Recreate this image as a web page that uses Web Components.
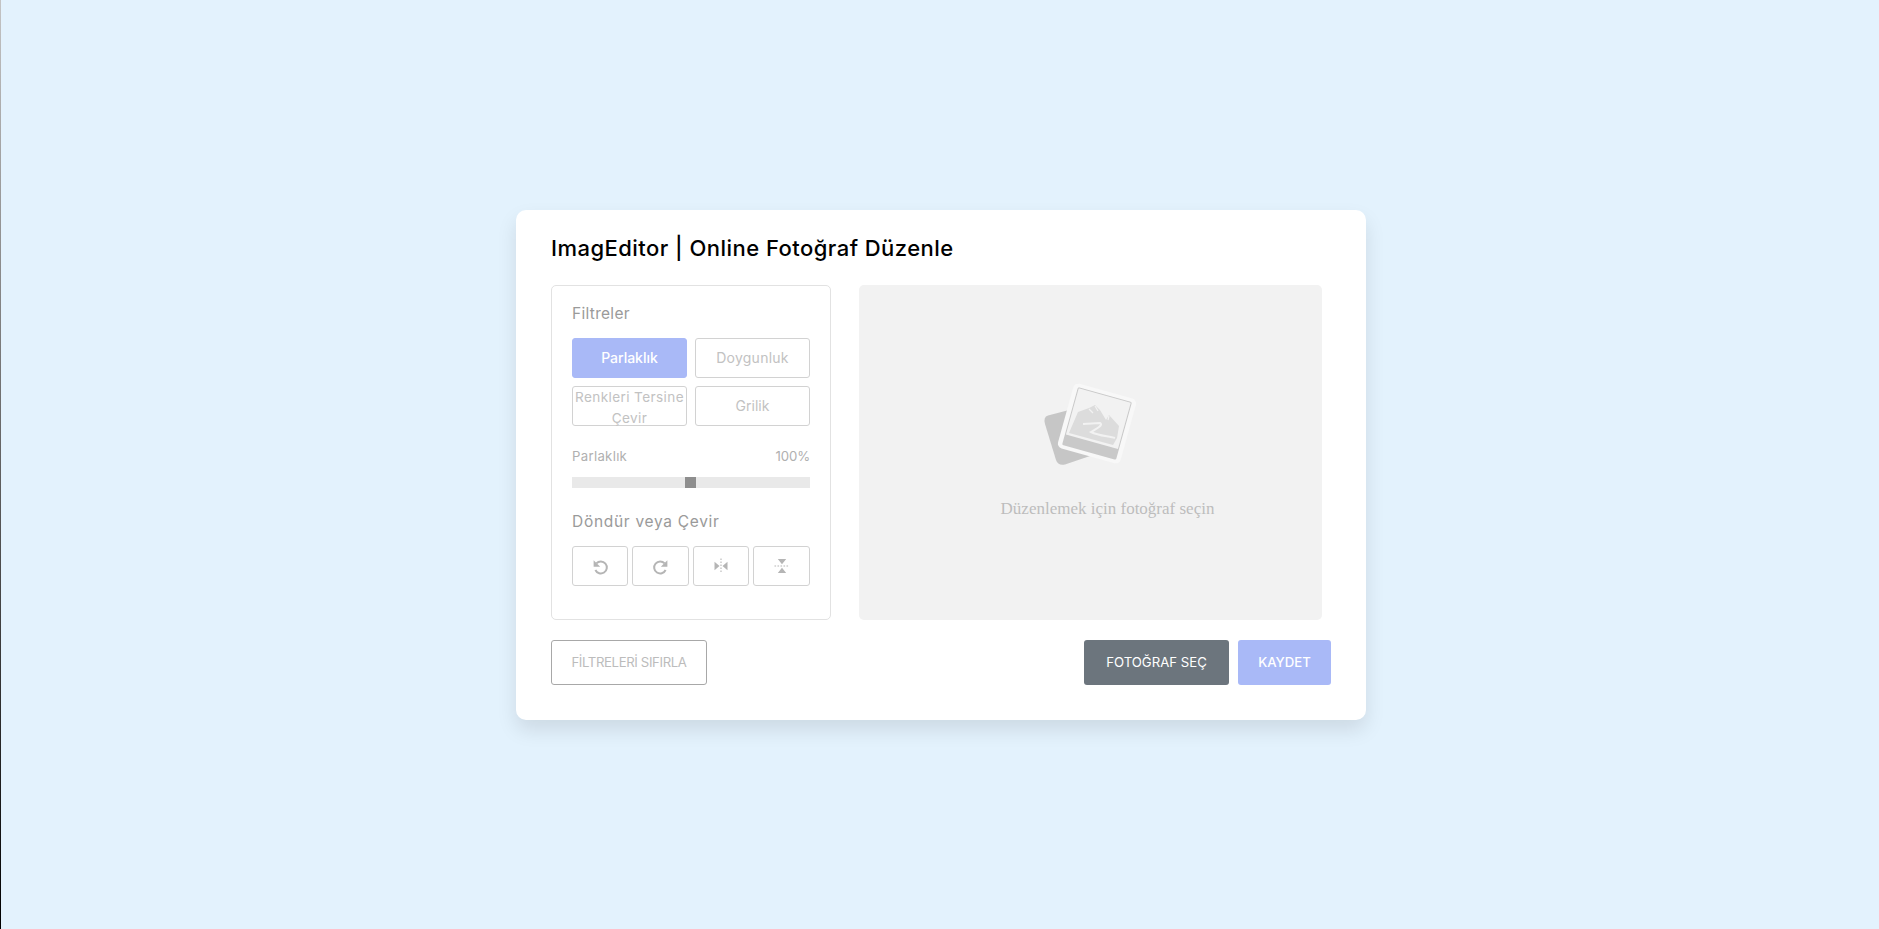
<!DOCTYPE html>
<html lang="tr">
<head>
<meta charset="utf-8">
<title>ImagEditor | Online Fotoğraf Düzenle</title>
<style>
  html, body { margin: 0; height: 100%; }
  body { background: #e3f2fd; font-family: Inter, "Noto Sans", sans-serif; }
</style>
</head>
<body>
<editor-page>
  <editor-card heading="ImagEditor | Online Fotoğraf Düzenle">
    <filter-panel slot="panel"></filter-panel>
    <preview-pane slot="preview" message="Düzenlemek için fotoğraf seçin"></preview-pane>
    <action-button slot="reset" kind="outline">FİLTRELERİ SIFIRLA</action-button>
    <action-button slot="choose" kind="dark">FOTOĞRAF SEÇ</action-button>
    <action-button slot="save" kind="primary">KAYDET</action-button>
  </editor-card>
</editor-page>

<script>
class EditorPage extends HTMLElement {
  connectedCallback() {
    this.attachShadow({ mode: 'open' }).innerHTML = `
      <style>
        :host { display: flex; height: 100vh; }
        .edge { width: 1px; flex: none; background: linear-gradient(#c4c4c4, #000); }
        .center { flex: 1; display: flex; align-items: center; justify-content: center; padding-left: 2px; }
      </style>
      <div class="edge"></div>
      <div class="center"><slot></slot></div>
    `;
  }
}

class EditorCard extends HTMLElement {
  connectedCallback() {
    const heading = this.getAttribute('heading') ?? '';
    this.attachShadow({ mode: 'open' }).innerHTML = `
      <style>
        :host {
          display: block; box-sizing: border-box; width: 850px; height: 510px;
          padding: 20px 35px 35px; background: #fff; border-radius: 10px;
          box-shadow: 0 10px 20px rgba(0,0,0,.1);
        }
        h2 { margin: 0; height: 55px; font-size: 22px; line-height: 36px; font-weight: 450; color: #000; letter-spacing: .46px; }
        .wrapper { display: flex; gap: 28px; height: 335px; }
        .controls { display: flex; justify-content: space-between; margin-top: 20px; }
        .row { display: flex; gap: 9px; }
      </style>
      <h2>${heading}</h2>
      <div class="wrapper">
        <slot name="panel"></slot>
        <slot name="preview"></slot>
      </div>
      <div class="controls">
        <slot name="reset"></slot>
        <div class="row"><slot name="choose"></slot><slot name="save"></slot></div>
      </div>
    `;
  }
}

class ToolButton extends HTMLElement {
  connectedCallback() {
    this.attachShadow({ mode: 'open' }).innerHTML = `
      <style>
        :host {
          display: flex; align-items: center; justify-content: center; box-sizing: border-box;
          height: 40px; border: 1px solid #d2d2d2; border-radius: 3px; background: #fff;
          color: #c2c2c2; font-size: 14px; line-height: 21px; text-align: center;
        }
        :host([active]) { background: #a9b9f7; border-color: #a9b9f7; color: #fff; font-weight: 500; }
      </style>
      <slot></slot>
    `;
  }
}

class RangeSlider extends HTMLElement {
  connectedCallback() {
    this.attachShadow({ mode: 'open' }).innerHTML = `
      <style>
        :host { display: flex; justify-content: center; height: 11px; background: #e9e9e9; }
        .thumb { width: 11px; margin-right: 1px; background: #8e8e8e; }
      </style>
      <div class="thumb"></div>
    `;
  }
}

class FilterPanel extends HTMLElement {
  connectedCallback() {
    this.attachShadow({ mode: 'open' }).innerHTML = `
      <style>
        :host {
          display: block; box-sizing: border-box; width: 280px; height: 335px;
          padding: 0 20px; border: 1px solid #e2e2e2; border-radius: 5px;
        }
        .title { height: 52px; line-height: 56px; font-size: 15.5px; letter-spacing: .3px; color: #9a9a9a; }
        .title.rotate { height: 58px; line-height: 68px; letter-spacing: .7px; }
        .options { display: grid; grid-template-columns: 115px 115px; justify-content: space-between; row-gap: 8px; }
        .dark { letter-spacing: .25px; }
        .renk { padding: 5px 0 0; font-size: 13.6px; letter-spacing: .38px; }
        .info { display: flex; justify-content: space-between; height: 51px; padding-top: 20px; box-sizing: border-box; font-size: 13.2px; line-height: 20px; letter-spacing: .3px; color: #b0b0b0; }
        .info span + span { letter-spacing: -.1px; }
        .rotate-row { display: grid; grid-template-columns: 56px 57px 56px 57px; gap: 4px; }
        svg { width: 24px; height: 24px; display: block; }
      </style>
      <div class="title">Filtreler</div>
      <div class="options">
        <tool-button active>Parlaklık</tool-button>
        <tool-button class="dark">Doygunluk</tool-button>
        <tool-button class="renk">Renkleri Tersine Çevir</tool-button>
        <tool-button>Grilik</tool-button>
      </div>
      <div class="info"><span>Parlaklık</span><span>100%</span></div>
      <range-slider></range-slider>
      <div class="title rotate">Döndür veya Çevir</div>
      <div class="rotate-row">
        <tool-button><svg viewBox="0 0 24 24" fill="none"><path d="M8.4 9.4A6 6 0 1 1 7.4 16" stroke="#b5b5b5" stroke-width="2"/><path d="M5.6 6.2v6.6h6.6z" fill="#b5b5b5"/></svg></tool-button>
        <tool-button><svg viewBox="0 0 24 24" fill="none"><path d="M15.6 9.4A6 6 0 1 0 16.6 16" stroke="#b5b5b5" stroke-width="2"/><path d="M18.4 6.2v6.6h-6.6z" fill="#b5b5b5"/></svg></tool-button>
        <tool-button><svg viewBox="0 0 24 24" fill="#b5b5b5"><path d="M5.5 7.8v8.4l5-4.2zM18.5 7.8v8.4L13.5 12z"/><path d="M12 4.5v15" stroke="#b5b5b5" stroke-width="1.1" stroke-dasharray="1.6 1.4"/></svg></tool-button>
        <tool-button><svg viewBox="0 0 24 24" fill="#b5b5b5"><path d="M7.8 5h8.4L12 10.2zM7.8 19h8.4L12 13.8z"/><path d="M4.5 12h15" stroke="#b5b5b5" stroke-width="1.1" stroke-dasharray="1.6 1.4"/></svg></tool-button>
      </div>
    `;
  }
}

class PreviewPane extends HTMLElement {
  connectedCallback() {
    const message = this.getAttribute('message') ?? '';
    this.attachShadow({ mode: 'open' }).innerHTML = `
      <style>
        :host {
          display: flex; flex-direction: column; align-items: center; box-sizing: border-box;
          width: 463px; height: 335px; padding-top: 85px; background: #f2f2f2; border-radius: 5px;
        }
        svg { width: 120px; height: 110px; display: block; }
        p { margin: 19px 0 0 34px; font: 17px/20px "Liberation Serif", serif; color: #bdbdbd; white-space: nowrap; }
      </style>
      <svg viewBox="1030 370 120 110">
        <path d="M1047 415.5 L1068 410 L1092 455 L1064 464.5 Q1057 466 1055 460 L1044 424 Q1042 417 1047 415.5Z" fill="#c6c6c6"/>
        <g transform="translate(1096 423.5) rotate(15.5)">
          <rect x="-32.5" y="-33.5" width="65" height="67" rx="5" fill="#f8f8f8"/>
          <rect x="-28" y="-30" width="56" height="60" rx="1.5" fill="#c9c9c9"/>
          <rect x="-27" y="-29" width="54" height="48" fill="#f2f2f2"/>
        </g>
        <path d="M1077 412 L1088 408 L1094 405 L1099 410 L1105 420 L1108 415 L1118 426 L1116 438 L1112 445 L1068 433 Z" fill="#dcdcdc"/>
        <path d="M1082 424 L1099 423 C1103 425 1095 429 1090 432 C1098 436 1108 436 1114 438" fill="none" stroke="#f2f2f2" stroke-width="2"/>
        <path d="M1088 409 L1092 413 M1094 406 L1097 411 M1108 416 L1107 420" fill="none" stroke="#f2f2f2" stroke-width="1.2"/>
      </svg>
      <p>${message}</p>
    `;
  }
}

class ActionButton extends HTMLElement {
  connectedCallback() {
    this.attachShadow({ mode: 'open' }).innerHTML = `
      <style>
        :host {
          display: flex; align-items: center; justify-content: center; box-sizing: border-box;
          height: 45px; border-radius: 3px; font-size: 13.2px; white-space: nowrap;
        }
        :host([kind="outline"]) { width: 156px; border: 1px solid #a8a8a8; color: #bcbcbc; letter-spacing: -.38px; }
        :host([kind="dark"]) { width: 145px; background: #6c757d; color: #fff; }
        :host([kind="primary"]) { width: 93px; background: #a9b9f7; color: #fff; font-weight: 500; }
      </style>
      <slot></slot>
    `;
  }
}

customElements.define('editor-page', EditorPage);
customElements.define('editor-card', EditorCard);
customElements.define('tool-button', ToolButton);
customElements.define('range-slider', RangeSlider);
customElements.define('filter-panel', FilterPanel);
customElements.define('preview-pane', PreviewPane);
customElements.define('action-button', ActionButton);
</script>
</body>
</html>
